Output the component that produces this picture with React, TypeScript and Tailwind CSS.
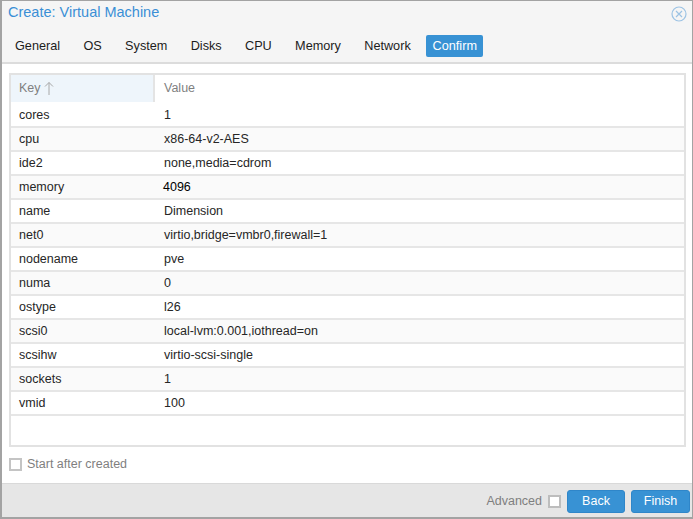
const FONT = "font-['Liberation_Sans',Arial,sans-serif]";

const TABS = ["General", "OS", "System", "Disks", "CPU", "Memory", "Network", "Confirm"];

const ROWS: [string, string][] = [
  ["cores", "1"],
  ["cpu", "x86-64-v2-AES"],
  ["ide2", "none,media=cdrom"],
  ["memory", "4096"],
  ["name", "Dimension"],
  ["net0", "virtio,bridge=vmbr0,firewall=1"],
  ["nodename", "pve"],
  ["numa", "0"],
  ["ostype", "l26"],
  ["scsi0", "local-lvm:0.001,iothread=on"],
  ["scsihw", "virtio-scsi-single"],
  ["sockets", "1"],
  ["vmid", "100"],
];

export default function App() {
  return (
    <div className={`${FONT} w-[693px] h-[519px] bg-white border-t border-r border-[#a3a3a3] border-b-2 border-l-2 flex flex-col text-[12.5px] overflow-hidden`}>
      {/* header + tabs */}
      <div className="bg-[#f5f5f5] h-[63px] shrink-0 border-b-2 border-[#dcdcdc] flex flex-col">
        <div className="flex items-center justify-between h-[23px] pl-[6px] pr-[5px]">
          <span className="text-[14.5px] text-[#3a8fd6] leading-[23px]">Create: Virtual Machine</span>
          <svg width="16" height="16" viewBox="0 0 16 16" fill="none" stroke="#9cc3e4" strokeWidth="1.2" className="mt-[2px]">
            <circle cx="8" cy="8" r="7" />
            <path d="M5 5l6 6M11 5l-6 6" />
          </svg>
        </div>
        <div className="flex items-center gap-[7.3px] pl-[5px] mt-[11px] text-[12.7px]">
          {TABS.map((t) =>
            t === "Confirm" ? (
              <span key={t} className="bg-[#3892d4] text-white h-[22px] leading-[22px] px-[6.5px] rounded-[2px]">{t}</span>
            ) : (
              <span key={t} className="text-[#1c1c1c] h-[22px] leading-[22px] px-[8px]">{t}</span>
            )
          )}
        </div>
      </div>

      {/* body */}
      <div className="flex-1 flex flex-col pl-[7px] pr-[6px] pt-[9px]">
        <div className="h-[374px] border-2 border-[#e2e2e2] flex flex-col">
          <div className="flex h-[27px] shrink-0 text-[#7f7f7f]">
            <div className="w-[144px] bg-[#eef5fb] border-r-2 border-[#e4e4e4] pl-[8px] flex items-center gap-[3px]">
              Key
              <svg width="10" height="15" viewBox="0 0 10 15" fill="none" stroke="#a8a8a8" strokeWidth="1">
                <path d="M5 14V1.5M1 5.5l4-4 4 4" />
              </svg>
            </div>
            <div className="pl-[9px] flex items-center">Value</div>
          </div>
          {ROWS.map(([k, v], i) => (
            <div
              key={k}
              className={`flex shrink-0 items-center border-b-2 border-[#e6e6e6] text-[#262626] ${i === 0 ? "h-[26px] pt-[2px]" : "h-[24px]"} ${i % 2 === 1 ? "bg-[#fafafa]" : "bg-white"}`}
            >
              <div className="w-[144px] pl-[8px]">{k}</div>
              <div className={k === "memory" ? "pl-[8px] text-black" : "pl-[9px]"}>{v}</div>
            </div>
          ))}
        </div>
        <div className="flex items-center gap-[5px] mt-[8px] text-[#7f7f7f]">
          <span className="w-[13px] h-[13px] border-2 border-[#c4c4c4] bg-white" />
          Start after created
        </div>
      </div>

      {/* footer */}
      <div className="h-[34px] shrink-0 bg-[#e6e6e6] border-t border-[#d9d9d9] flex items-center justify-end gap-[6px] pr-[2px] pt-[1px]">
        <span className="text-[#7f7f7f]">Advanced</span>
        <span className="w-[13px] h-[13px] border-2 border-[#bdbdbd] bg-white" />
        <button className="w-[58px] h-[23px] rounded-[3px] bg-[#3892d4] border border-[#2f86c9] text-white">Back</button>
        <button className="w-[59px] h-[23px] rounded-[3px] bg-[#3892d4] border border-[#2f86c9] text-white">Finish</button>
      </div>
    </div>
  );
}
